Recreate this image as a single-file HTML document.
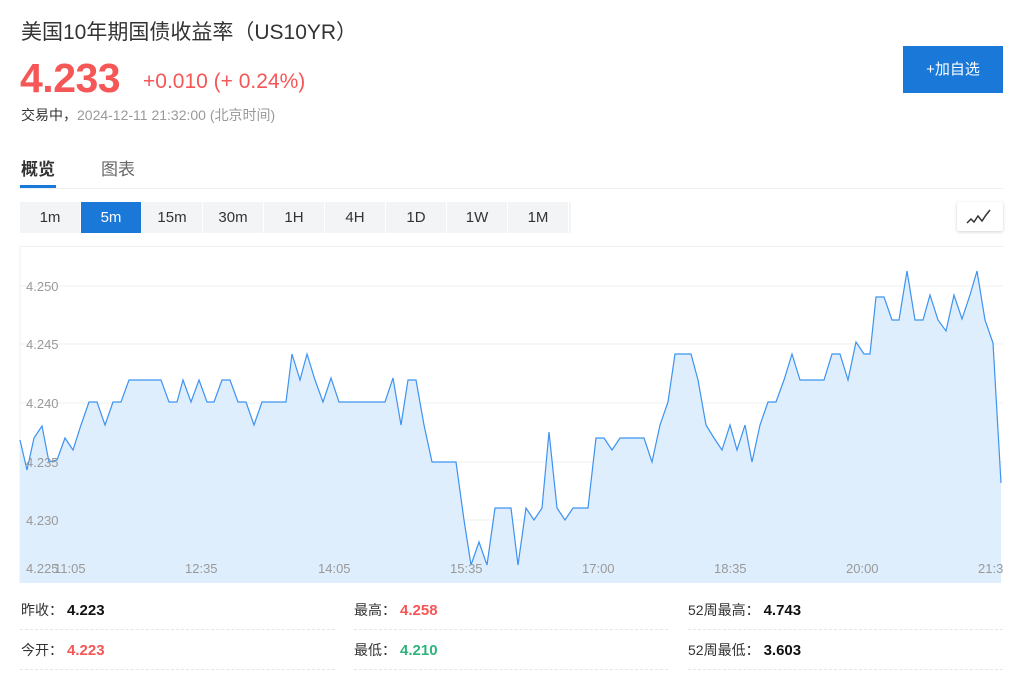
<!DOCTYPE html>
<html><head><meta charset="utf-8"><style>
*{margin:0;padding:0;box-sizing:border-box}
body{width:1024px;height:680px;background:#fff;font-family:"Liberation Sans","Noto Sans CJK SC",sans-serif;position:relative;overflow:hidden;color:#333}
.abs{position:absolute}
.title{left:21px;top:16px;font-size:21px;color:#333}
.price{left:20px;top:55px;font-size:41px;font-weight:bold;color:#f55656;letter-spacing:-0.5px}
.chg{left:143px;top:70px;font-size:21px;color:#f55656}
.time{left:21px;top:105px;font-size:14px;color:#999}
.time b{font-weight:normal;color:#333}
.btn{left:903px;top:46px;width:100px;height:47px;background:#1a78d8;color:#fff;font-size:15px;text-align:center;line-height:47px}
.tab1{left:21px;top:155px;font-size:17px;font-weight:bold;color:#333}
.tab2{left:101px;top:155px;font-size:17px;color:#666}
.uline{left:20px;top:185px;width:36px;height:3px;background:#1a78d8}
.sep{left:20px;top:188px;width:983px;height:1px;background:#eef0f2}
.bar{left:20px;top:202px;width:551px;height:31px;background:#f3f4f6;display:flex}
.bar div{width:61px;text-align:center;line-height:31px;font-size:15px;color:#333;border-right:1px solid #fff}
.bar div.on{background:#1a78d8;color:#fff}
.ico{left:957px;top:202px;width:46px;height:29px;background:#fff;box-shadow:0 1px 3px rgba(0,0,0,.18);border-radius:2px}
.sep2{left:20px;top:246px;width:983px;height:1px;background:#eef0f2}
.stat{font-size:14px;color:#333}
.stat b{font-size:15px;margin-left:4px}
.dl{height:1px;border-top:1px dashed #e6e6e6}
</style></head><body>
<div class="abs title">美国10年期国债收益率（US10YR）</div>
<div class="abs price">4.233</div>
<div class="abs chg">+0.010 (+ 0.24%)</div>
<div class="abs time"><b>交易中，</b>2024-12-11 21:32:00 (北京时间)</div>
<div class="abs btn">+加自选</div>
<div class="abs tab1">概览</div>
<div class="abs tab2">图表</div>
<div class="abs uline"></div>
<div class="abs sep"></div>
<div class="abs bar"><div>1m</div><div class="on">5m</div><div>15m</div><div>30m</div><div>1H</div><div>4H</div><div>1D</div><div>1W</div><div>1M</div></div>
<div class="abs ico"><svg width="46" height="29"><polyline points="10,21 14,17 17,20 21,14 25,19 29,13 33,8" fill="none" stroke="#333" stroke-width="1.5"/></svg></div>
<div class="abs sep2"></div>
<svg class="abs" style="left:0;top:0" width="1024" height="680">
<g stroke="#eef0f2" stroke-width="1"><line x1="20" y1="286" x2="1003" y2="286"/><line x1="20" y1="344" x2="1003" y2="344"/><line x1="20" y1="403" x2="1003" y2="403"/><line x1="20" y1="462" x2="1003" y2="462"/><line x1="20" y1="520" x2="1003" y2="520"/><line x1="20" y1="247" x2="20" y2="583"/></g>
<polygon fill="#dfeefd" points="20,583 20,440 27,470 34,438 42,426 49,462 57,460 65,438 73,450 81,425 89,402 97,402 105,425 113,402 121,402 129,380 137,380 145,380 153,380 161,380 169,402 177,402 183,380 191,402 199,380 207,402 214,402 222,380 230,380 238,402 246,402 254,425 262,402 270,402 278,402 286,402 292,354 300,380 307,354 315,380 323,402 331,378 339,402 347,402 385,402 393,378 401,425 408,380 416,380 424,425 432,462 440,462 448,462 456,462 464,520 471,565 479,542 487,565 495,508 503,508 511,508 518,565 526,508 534,520 542,508 549,432 557,508 565,520 573,508 581,508 588,508 596,438 604,438 612,450 620,438 628,438 636,438 644,438 652,462 660,425 668,402 675,354 683,354 691,354 698,380 706,425 714,438 722,450 730,425 737,450 745,425 752,462 760,425 768,402 776,402 784,380 792,354 800,380 808,380 816,380 824,380 832,354 840,354 848,380 856,342 864,354 870,354 876,297 884,297 892,320 899,320 907,271 915,320 923,320 930,295 938,320 946,331 954,295 962,319 970,295 977,271 985,320 993,343 1001,483 1001,583"/>
<polyline fill="none" stroke="#3d93f0" stroke-width="1.2" points="20,440 27,470 34,438 42,426 49,462 57,460 65,438 73,450 81,425 89,402 97,402 105,425 113,402 121,402 129,380 137,380 145,380 153,380 161,380 169,402 177,402 183,380 191,402 199,380 207,402 214,402 222,380 230,380 238,402 246,402 254,425 262,402 270,402 278,402 286,402 292,354 300,380 307,354 315,380 323,402 331,378 339,402 347,402 385,402 393,378 401,425 408,380 416,380 424,425 432,462 440,462 448,462 456,462 464,520 471,565 479,542 487,565 495,508 503,508 511,508 518,565 526,508 534,520 542,508 549,432 557,508 565,520 573,508 581,508 588,508 596,438 604,438 612,450 620,438 628,438 636,438 644,438 652,462 660,425 668,402 675,354 683,354 691,354 698,380 706,425 714,438 722,450 730,425 737,450 745,425 752,462 760,425 768,402 776,402 784,380 792,354 800,380 808,380 816,380 824,380 832,354 840,354 848,380 856,342 864,354 870,354 876,297 884,297 892,320 899,320 907,271 915,320 923,320 930,295 938,320 946,331 954,295 962,319 970,295 977,271 985,320 993,343 1001,483"/>
<g font-family="Liberation Sans,sans-serif" font-size="13" fill="#999">
<text x="26" y="291">4.250</text><text x="26" y="349">4.245</text><text x="26" y="408">4.240</text><text x="26" y="467">4.235</text><text x="26" y="525">4.230</text><text x="26" y="573">4.225</text>
<text x="54" y="573">11:05</text><text x="185" y="573">12:35</text><text x="318" y="573">14:05</text><text x="450" y="573">15:35</text><text x="582" y="573">17:00</text><text x="714" y="573">18:35</text><text x="846" y="573">20:00</text><text x="978" y="573">21:3</text>
</g>
</svg>
<div class="abs stat" style="left:21px;top:600px">昨收：<b style="color:#111">4.223</b></div>
<div class="abs stat" style="left:354px;top:600px">最高：<b style="color:#f55656">4.258</b></div>
<div class="abs stat" style="left:688px;top:600px">52周最高：<b style="color:#111">4.743</b></div>
<div class="abs stat" style="left:21px;top:640px">今开：<b style="color:#f55656">4.223</b></div>
<div class="abs stat" style="left:354px;top:640px">最低：<b style="color:#2fb37c">4.210</b></div>
<div class="abs stat" style="left:688px;top:640px">52周最低：<b style="color:#111">3.603</b></div>
<div class="abs dl" style="left:20px;top:629px;width:315px"></div>
<div class="abs dl" style="left:354px;top:629px;width:314px"></div>
<div class="abs dl" style="left:688px;top:629px;width:315px"></div>
<div class="abs dl" style="left:20px;top:669px;width:315px"></div>
<div class="abs dl" style="left:354px;top:669px;width:314px"></div>
<div class="abs dl" style="left:688px;top:669px;width:315px"></div>
</body></html>
